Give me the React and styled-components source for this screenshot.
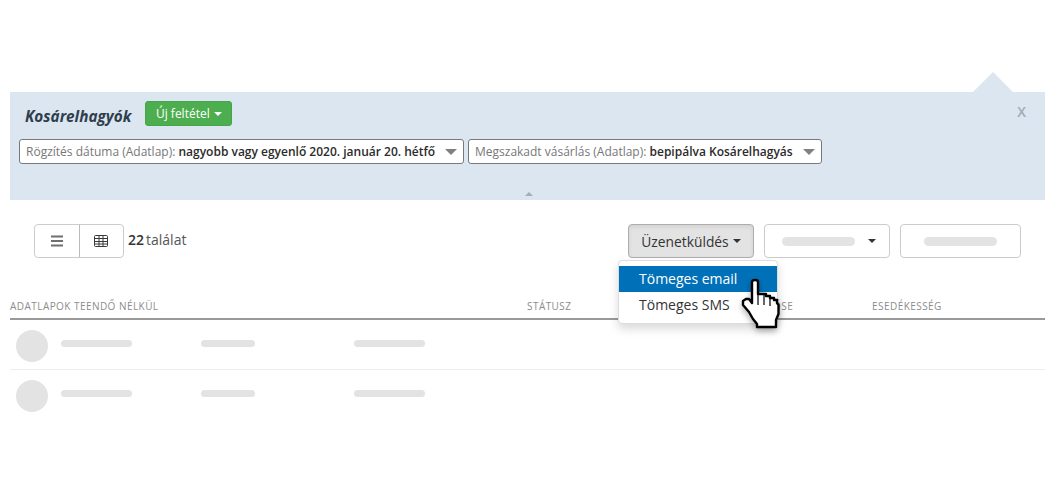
import React from 'react';
import styled, { createGlobalStyle } from 'styled-components';

const Global = createGlobalStyle`
  html, body { margin: 0; padding: 0; background: #fff; }
  body { font-family: "Open Sans", "Noto Sans", sans-serif; color: #333; width: 1062px; height: 500px; overflow: hidden; }
  * { box-sizing: border-box; }
`;

const Page = styled.div`
  padding: 72px 17px 0 10px;
  width: 1062px;
  height: 500px;
`;
const Panel = styled.section`
  position: relative;
  height: 108px;
  margin-top: 20px;
  background: #dce6f1;
  padding: 9px 9px 0 9px;
  &::before {
    content: '';
    position: absolute;
    top: -20px;
    left: 963px;
    border-left: 20px solid transparent;
    border-right: 20px solid transparent;
    border-bottom: 20px solid #dce6f1;
  }
`;
const TitleRow = styled.div`
  display: flex;
  align-items: flex-start;
  height: 26px;
  padding-left: 6px;
  gap: 14px;
`;
const Title = styled.h2`
  margin: 5px 0 0;
  font-size: 15.3px;
  line-height: 20px;
  font-weight: 700;
  font-style: italic;
  color: #2f3e4d;
`;
const GreenButton = styled.button`
  height: 25px;
  width: 87px;
  padding: 0;
  font: 12px "Open Sans", sans-serif;
  color: #fff;
  background: #4cae4f;
  border: 1px solid #46a54a;
  border-radius: 3px;
  display: flex;
  align-items: center;
  justify-content: center;
  gap: 4px;
`;
const Caret = styled.span`
  display: inline-block;
  border-left: 4px solid transparent;
  border-right: 4px solid transparent;
  border-top: 4px solid ${p => p.$color || '#333'};
`;
const Close = styled.span`
  position: absolute;
  top: 10px;
  right: 19px;
  font-size: 14px;
  font-weight: 600;
  color: #a3aab2;
`;
const Filters = styled.div`
  display: flex;
  gap: 4px;
  margin-top: 12px;
`;
const Filter = styled.div`
  height: 25px;
  width: ${p => p.$w}px;
  display: flex;
  align-items: center;
  justify-content: space-between;
  padding: 0 6px;
  background: #fff;
  border: 1px solid #77797c;
  border-radius: 3px;
  font-size: 12px;
  color: #777;
  white-space: nowrap;
  b { color: #2b2b2b; font-weight: 600; }
`;
const FilterCaret = styled.span`
  border-left: 6px solid transparent;
  border-right: 6px solid transparent;
  border-top: 6px solid #808080;
`;
const CollapseCaret = styled.span`
  position: absolute;
  left: 515px;
  bottom: 4px;
  border-left: 4px solid transparent;
  border-right: 4px solid transparent;
  border-bottom: 4px solid #a6adb4;
`;
const Toolbar = styled.div`
  display: flex;
  align-items: flex-start;
  margin-top: 24px;
  padding: 0 24px;
  height: 34px;
`;
const ViewGroup = styled.div`
  display: flex;
  width: 90px;
  height: 34px;
  border: 1px solid #ccc;
  border-radius: 4px;
`;
const ViewCell = styled.div`
  flex: 1;
  display: flex;
  align-items: center;
  justify-content: center;
  & + & { border-left: 1px solid #bbb; }
`;
const Count = styled.div`
  margin-left: 4px;
  font-size: 14px;
  line-height: 32px;
  color: #555;
  b { font-weight: 600; color: #333; margin-right: 2px; }
`;
const Right = styled.div`
  margin-left: auto;
  display: flex;
  gap: 10px;
  position: relative;
`;
const ActionButton = styled.div`
  width: ${p => p.$w}px;
  height: 34px;
  display: flex;
  align-items: center;
  justify-content: ${p => p.$between ? 'space-between' : 'center'};
  padding: ${p => p.$between ? '0 13px 0 17px' : '0'};
  gap: 4px;
  border: 1px solid ${p => p.$active ? '#adadad' : '#ccc'};
  border-radius: 4px;
  background: ${p => p.$active ? '#e3e3e3' : '#fff'};
  box-shadow: ${p => p.$active ? 'inset 0 2px 4px rgba(0,0,0,.08)' : 'none'};
  font-size: 13.8px;
  color: #333;
`;
const Bar = styled.span`
  display: block;
  width: ${p => p.$w}px;
  height: ${p => p.$h || 8}px;
  border-radius: 5px;
  background: #e3e3e3;
`;
const Menu = styled.div`
  position: absolute;
  z-index: 3;
  top: 36px;
  left: -10px;
  width: 160px;
  height: 64px;
  padding: 5px 0;
  background: #fff;
  border: 1px solid #ddd;
  border-radius: 4px;
  box-shadow: 0 5px 10px rgba(0,0,0,.15);
`;
const MenuItem = styled.div`
  height: 26px;
  padding-left: 20px;
  font-size: 14px;
  line-height: 26px;
  color: ${p => p.$active ? '#fff' : '#333'};
  background: ${p => p.$active ? '#0071b8' : 'transparent'};
`;
const Cursor = styled.svg`
  position: absolute;
  z-index: 4;
  top: 55px;
  left: 113px;
  overflow: visible;
  filter: drop-shadow(0 3px 3px rgba(0,0,0,.3));
`;
const Table = styled.div`
  margin-top: 40px;
`;
const Head = styled.div`
  display: grid;
  grid-template-columns: 517px 217px 128px 1fr;
  height: 22px;
  border-bottom: 2px solid #999;
  font-size: 10px;
  line-height: 16px;
  letter-spacing: .45px;
  color: #8c8c8c;
  white-space: nowrap;
`;
const Row = styled.div`
  display: flex;
  align-items: center;
  height: 50px;
  padding: 2px 0 0 6px;
  border-bottom: 1px solid ${p => p.$last ? 'transparent' : '#eee'};
`;
const Avatar = styled.span`
  width: 32px;
  height: 32px;
  border-radius: 50%;
  background: #e3e3e3;
  margin-right: 13px;
`;
const RowBars = styled.div`
  display: grid;
  grid-template-columns: 140px 153px 72px;
  align-items: center;
  margin-top: -4px;
`;

const App = () => (
  <Page>
    <Global />
    <Panel>
      <TitleRow>
        <Title>Kosárelhagyók</Title>
        <GreenButton>Új feltétel <Caret $color="#fff" /></GreenButton>
      </TitleRow>
      <Close>X</Close>
      <Filters>
        <Filter $w={445}>
          <span>Rögzítés dátuma (Adatlap): <b>nagyobb vagy egyenlő 2020. január 20. hétfő</b></span>
          <FilterCaret />
        </Filter>
        <Filter $w={354}>
          <span>Megszakadt vásárlás (Adatlap): <b>bepipálva Kosárelhagyás</b></span>
          <FilterCaret />
        </Filter>
      </Filters>
      <CollapseCaret />
    </Panel>
    <Toolbar>
      <ViewGroup>
        <ViewCell>
          <svg width="14" height="12" viewBox="0 0 14 12"><path d="M1 1.5h12M1 6h12M1 10.5h12" stroke="#6f6f6f" strokeWidth="1.9" /></svg>
        </ViewCell>
        <ViewCell>
          <svg width="14" height="12" viewBox="0 0 14 12" fill="none" stroke="#3a3a3a"><rect x=".5" y=".5" width="13" height="11" rx="1" /><path d="M.5 3.5h13M.5 6.5h13M.5 9h13M5 .5v11M9 .5v11" /></svg>
        </ViewCell>
      </ViewGroup>
      <Count><b>22</b>találat</Count>
      <Right>
        <ActionButton $w={126} $active>Üzenetküldés <Caret /></ActionButton>
        <ActionButton $w={126} $between><Bar $w={73} $h={9} /><Caret /></ActionButton>
        <ActionButton $w={121}><Bar $w={73} $h={9} /></ActionButton>
        <Menu>
          <MenuItem $active>Tömeges email</MenuItem>
          <MenuItem>Tömeges SMS</MenuItem>
        </Menu>
        <Cursor width="39" height="50" viewBox="0 0 39 50">
          <path d="M11 3 Q11 1 14 1 Q17 1 17 3 V15 H22 V15 L25 15 V17 H29 V19 H33 V21 H36 V24 L37.5 26 V35 L35 41 V48 H16 V45 L12 40 L8 33 L2 26 V22 L5 20 H8 L11 24 Z" fill="#fff" stroke="#000" strokeWidth="2.4" strokeLinejoin="round" />
          <path d="M17 15 V26 M23 16 V26 M29 19 V27" stroke="#000" strokeWidth="1.2" fill="none" />
        </Cursor>
      </Right>
    </Toolbar>
    <Table>
      <Head>
        <span>ADATLAPOK TEENDŐ NÉLKÜL</span>
        <span>STÁTUSZ</span>
        <span>FELELŐSE</span>
        <span>ESEDÉKESSÉG</span>
      </Head>
      <Row>
        <Avatar />
        <RowBars><Bar $w={71} $h={7} /><Bar $w={54} $h={7} /><Bar $w={71} $h={7} /></RowBars>
      </Row>
      <Row $last>
        <Avatar />
        <RowBars><Bar $w={71} $h={7} /><Bar $w={54} $h={7} /><Bar $w={71} $h={7} /></RowBars>
      </Row>
    </Table>
  </Page>
);

export default App;
